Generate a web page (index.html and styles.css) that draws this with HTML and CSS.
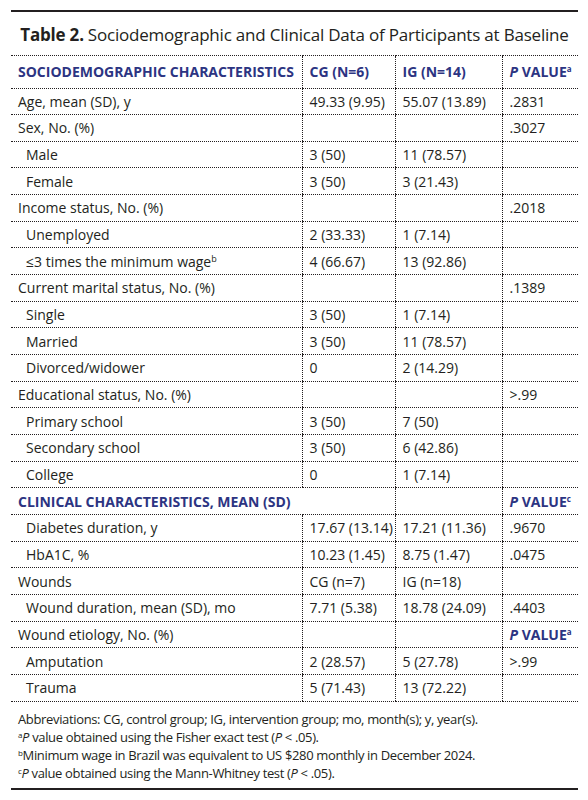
FILE: index.html
```html
<!DOCTYPE html>
<html lang="en">
<head>
<meta charset="utf-8">
<title>Table 2</title>
<link rel="stylesheet" href="styles.css">
</head>
<body>
<div class="wrap">
  <div class="rule-top"></div>
  <h1 class="title"><b>Table 2.</b> Sociodemographic and Clinical Data of Participants at Baseline</h1>
  <table class="data">
    <colgroup>
      <col class="c1"><col class="c2"><col class="c3"><col class="c4">
    </colgroup>
    <tr class="hdr">
      <td>SOCIODEMOGRAPHIC CHARACTERISTICS</td>
      <td class="v">CG (N=6)</td>
      <td class="v">IG (N=14)</td>
      <td class="v"><i>P</i> VALUE<sup>a</sup></td>
    </tr>
    <tr><td>Age, mean (SD), y</td><td class="v">49.33 (9.95)</td><td class="v">55.07 (13.89)</td><td class="v">.2831</td></tr>
    <tr><td>Sex, No. (%)</td><td class="v"></td><td class="v"></td><td class="v">.3027</td></tr>
    <tr><td class="ind">Male</td><td class="v">3 (50)</td><td class="v">11 (78.57)</td><td class="v"></td></tr>
    <tr><td class="ind">Female</td><td class="v">3 (50)</td><td class="v">3 (21.43)</td><td class="v"></td></tr>
    <tr><td>Income status, No. (%)</td><td class="v"></td><td class="v"></td><td class="v">.2018</td></tr>
    <tr><td class="ind">Unemployed</td><td class="v">2 (33.33)</td><td class="v">1 (7.14)</td><td class="v"></td></tr>
    <tr><td class="ind">≤3 times the minimum wage<sup>b</sup></td><td class="v">4 (66.67)</td><td class="v">13 (92.86)</td><td class="v"></td></tr>
    <tr><td>Current marital status, No. (%)</td><td class="v"></td><td class="v"></td><td class="v">.1389</td></tr>
    <tr><td class="ind">Single</td><td class="v">3 (50)</td><td class="v">1 (7.14)</td><td class="v"></td></tr>
    <tr><td class="ind">Married</td><td class="v">3 (50)</td><td class="v">11 (78.57)</td><td class="v"></td></tr>
    <tr><td class="ind">Divorced/widower</td><td class="v">0</td><td class="v">2 (14.29)</td><td class="v"></td></tr>
    <tr><td>Educational status, No. (%)</td><td class="v"></td><td class="v"></td><td class="v">&gt;.99</td></tr>
    <tr><td class="ind">Primary school</td><td class="v">3 (50)</td><td class="v">7 (50)</td><td class="v"></td></tr>
    <tr><td class="ind">Secondary school</td><td class="v">3 (50)</td><td class="v">6 (42.86)</td><td class="v"></td></tr>
    <tr><td class="ind">College</td><td class="v">0</td><td class="v">1 (7.14)</td><td class="v"></td></tr>
    <tr class="sub"><td colspan="2">CLINICAL CHARACTERISTICS, MEAN (SD)</td><td class="v"></td><td class="v"><i>P</i> VALUE<sup>c</sup></td></tr>
    <tr><td class="ind">Diabetes duration, y</td><td class="v">17.67 (13.14)</td><td class="v">17.21 (11.36)</td><td class="v">.9670</td></tr>
    <tr><td class="ind">HbA1C, %</td><td class="v">10.23 (1.45)</td><td class="v">8.75 (1.47)</td><td class="v">.0475</td></tr>
    <tr><td>Wounds</td><td class="v">CG (n=7)</td><td class="v">IG (n=18)</td><td class="v"></td></tr>
    <tr><td class="ind">Wound duration, mean (SD), mo</td><td class="v">7.71 (5.38)</td><td class="v">18.78 (24.09)</td><td class="v">.4403</td></tr>
    <tr><td>Wound etiology, No. (%)</td><td class="v"></td><td class="v"></td><td class="v pv"><i>P</i> VALUE<sup>a</sup></td></tr>
    <tr><td class="ind">Amputation</td><td class="v">2 (28.57)</td><td class="v">5 (27.78)</td><td class="v">&gt;.99</td></tr>
    <tr><td class="ind">Trauma</td><td class="v">5 (71.43)</td><td class="v">13 (72.22)</td><td class="v"></td></tr>
  </table>
  <div class="notes">
    <p>Abbreviations: CG, control group; IG, intervention group; mo, month(s); y, year(s).</p>
    <p><sup>a</sup><i>P</i> value obtained using the Fisher exact test (<i>P</i> &lt; .05).</p>
    <p><sup>b</sup>Minimum wage in Brazil was equivalent to US $280 monthly in December 2024.</p>
    <p><sup>c</sup><i>P</i> value obtained using the Mann-Whitney test (<i>P</i> &lt; .05).</p>
  </div>
  <div class="rule-bottom"></div>
</div>
</body>
</html>
```

FILE: styles.css
```css
html, body {
  margin: 0;
  padding: 0;
  background: #ffffff;
}
body {
  font-family: "Open Sans", "Noto Sans", sans-serif;
  color: #231f20;
}
.wrap {
  width: 567px;
  margin-left: 11px;
  padding-top: 10px;
}
.rule-top {
  height: 2px;
  background: #231f20;
}
.title {
  margin: 0;
  height: 43px;
  padding-top: 2px;
  box-sizing: border-box;
  display: flex;
  align-items: center;
  justify-content: center;
  font-size: 17px;
  font-weight: 400;
  letter-spacing: -0.2px;
  white-space: nowrap;
}
.title b {
  font-weight: 700;
  margin-right: 4px;
}
.data {
  width: 567px;
  border-collapse: collapse;
  table-layout: fixed;
  font-size: 14px;
}
.c1 { width: 291px; }
.c2 { width: 93px; }
.c3 { width: 107px; }
.c4 { width: 76px; }
.data td {
  border-top: 1px dotted #231f20;
  border-bottom: 1px dotted #231f20;
  height: 26.67px;
  padding: 0 6px 0 7px;
  box-sizing: border-box;
  white-space: nowrap;
  vertical-align: middle;
}
.data td.v {
  border-left: 1px dotted #231f20;
}
.data td.ind {
  padding-left: 15px;
}
.data sup {
  font-size: 9px;
  line-height: 0;
  vertical-align: 5px;
}
.hdr td {
  height: 32.5px;
  font-size: 14px;
  font-weight: 700;
  color: #2c3482;
}
.hdr td sup, .sub td sup, .pv sup {
  font-size: 8px;
}
.sub td, .pv {
  font-size: 14px;
  font-weight: 700;
  color: #2c3482;
}
.notes {
  padding: 8px 0 0 7px;
  font-size: 13px;
  letter-spacing: -0.35px;
}
.notes p {
  margin: 0;
  line-height: 18.3px;
}
.notes sup {
  font-size: 8px;
  line-height: 0;
  vertical-align: 4px;
}
.rule-bottom {
  margin-top: 5px;
  height: 2px;
  background: #231f20;
}
```
